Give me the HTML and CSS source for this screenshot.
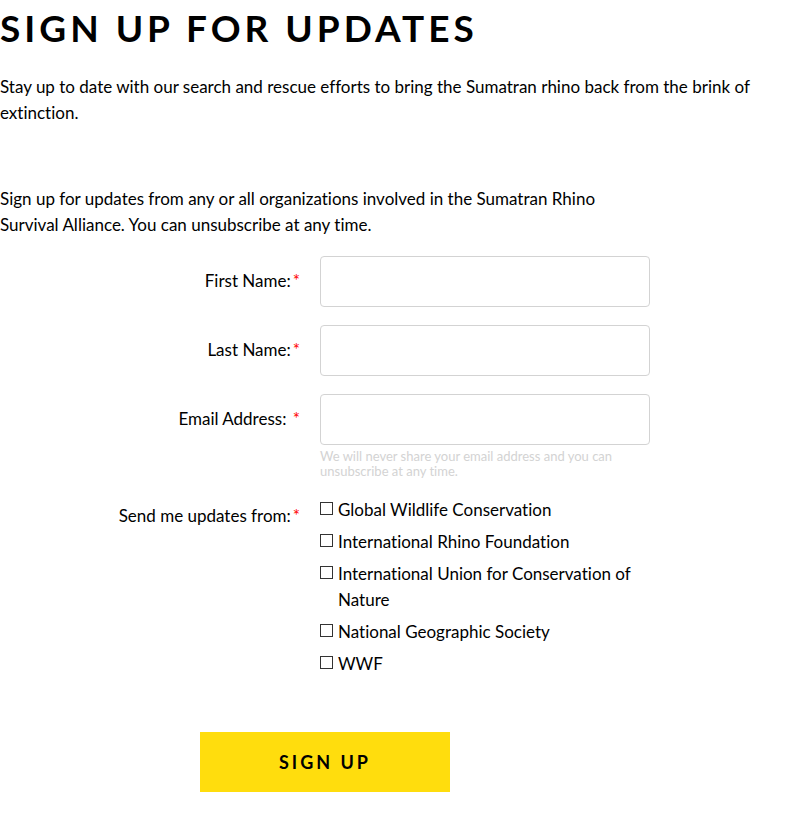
FILE: index.html
```html
<!DOCTYPE html>
<html lang="en">
<head>
<meta charset="utf-8">
<meta name="viewport" content="width=device-width, initial-scale=1">
<title>Sign Up for Updates</title>
<link rel="stylesheet" href="styles.css">
</head>
<body>
<main class="page">
  <h1 class="title">SIGN UP FOR UPDATES</h1>
  <p class="lead">Stay up to date with our search and rescue efforts to bring the Sumatran rhino back from the brink of extinction.</p>
  <form class="form">
    <p class="intro">Sign up for updates from any or all organizations involved in the Sumatran Rhino Survival Alliance. You can unsubscribe at any time.</p>
    <div class="row">
      <label class="label" for="first">First Name:<span class="req">*</span></label>
      <input class="input" id="first" type="text">
    </div>
    <div class="row">
      <label class="label" for="last">Last Name:<span class="req">*</span></label>
      <input class="input" id="last" type="text">
    </div>
    <div class="row">
      <label class="label" for="email">Email Address: <span class="req">*</span></label>
      <div class="field">
        <input class="input" id="email" type="email">
        <p class="hint">We will never share your email address and you can unsubscribe at any time.</p>
      </div>
    </div>
    <div class="row" role="group" aria-labelledby="from">
      <div class="label label-group" id="from">Send me updates from:<span class="req">*</span></div>
      <div class="choices">
        <label class="choice"><input class="box" type="checkbox"><span>Global Wildlife Conservation</span></label>
        <label class="choice"><input class="box" type="checkbox"><span>International Rhino Foundation</span></label>
        <label class="choice"><input class="box" type="checkbox"><span>International Union for Conservation of Nature</span></label>
        <label class="choice"><input class="box" type="checkbox"><span>National Geographic Society</span></label>
        <label class="choice"><input class="box" type="checkbox"><span>WWF</span></label>
      </div>
    </div>
    <button class="submit" type="submit">SIGN UP</button>
  </form>
</main>
</body>
</html>
```

FILE: styles.css
```css
* { box-sizing: border-box; }
body {
  margin: 0;
  background: #fff;
  color: #000;
  font-family: Lato, "Open Sans", sans-serif;
  font-size: 17px;
  line-height: 26px;
  font-variant-ligatures: none;
}
h1, p { margin: 0; }
.page { padding: 4px 0 30px; }
.title {
  font-size: 37px;
  line-height: 48px;
  font-weight: 700;
  letter-spacing: 4px;
}
.lead { margin-top: 22px; max-width: 780px; }
.form { margin-top: 60px; max-width: 650px; }
.intro { max-width: 610px; margin-bottom: 18px; }
.row {
  display: grid;
  grid-template-columns: 300px 1fr;
  column-gap: 20px;
  align-items: start;
  margin-bottom: 18px;
}
.label { text-align: right; padding-top: 12px; }
.label-group { padding-top: 6px; }
.req { color: #f00; margin-left: 2px; }
.input {
  display: block;
  width: 100%;
  height: 51px;
  padding: 0 12px;
  border: 1px solid #d3d3d3;
  border-radius: 4px;
  background: #fff;
  font: inherit;
}
.hint {
  margin-top: 4px;
  font-size: 13px;
  line-height: 15px;
  color: #d3d3d3;
}
.choices { display: grid; row-gap: 6px; }
.choice { display: flex; gap: 5px; }
.box {
  appearance: none;
  flex: none;
  width: 13px;
  height: 13px;
  margin: 5px 0 0;
  border: 1px solid #333;
  background: #fff;
}
.box:checked { background: #ffdd0d; }
.submit {
  display: block;
  width: 250px;
  height: 60px;
  margin: 55px auto 0;
  border: 0;
  background: #ffdd0d;
  color: #000;
  font: inherit;
  font-size: 18px;
  font-weight: 700;
  letter-spacing: 3px;
}
```
